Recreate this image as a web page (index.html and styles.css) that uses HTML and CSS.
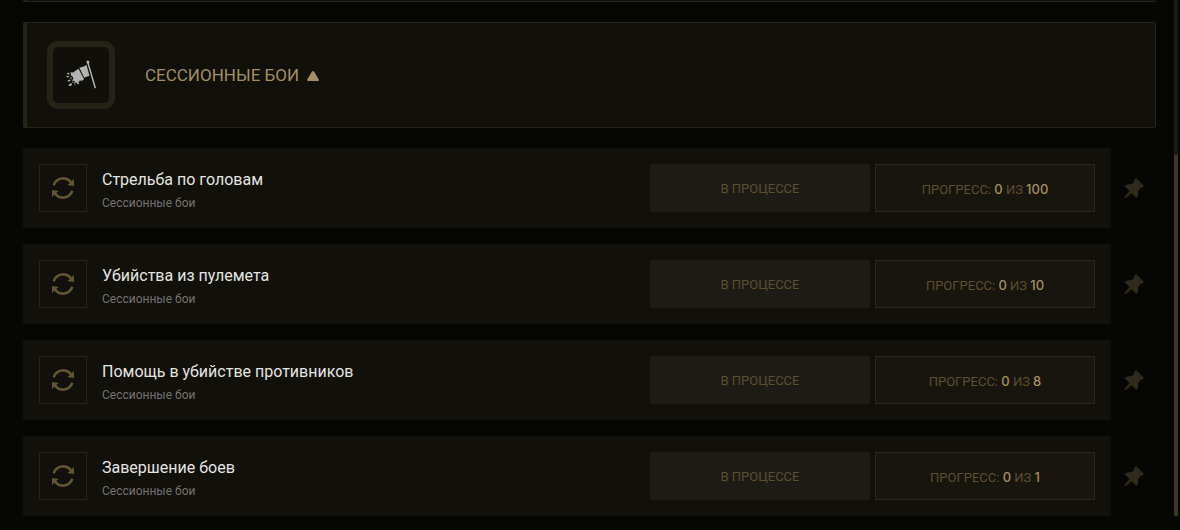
FILE: index.html
```html
<!DOCTYPE html>
<html lang="ru">
<head>
<meta charset="UTF-8">
<meta name="viewport" content="width=device-width, initial-scale=1">
<title>Сессионные бои</title>
<link rel="stylesheet" href="styles.css">
</head>
<body>
<svg class="sprite" aria-hidden="true">
  <symbol id="icon-repeat" viewBox="0 0 24 24">
    <path d="M2.700 9.300A9.800 9.800 0 0 1 20 6.500" fill="none" stroke="currentColor" stroke-width="2.600"/>
    <path d="M23 3v7l-6.500-1z"/>
    <path d="M21.300 14.700A9.800 9.800 0 0 1 4 17.500" fill="none" stroke="currentColor" stroke-width="2.600"/>
    <path d="M1 21v-7l6.500 1z"/>
  </symbol>
  <symbol id="icon-pin" viewBox="0 0 20 20">
    <path d="M12 0l8 8-2 2-1-.4-3 3.400c.5 2.500.2 4.700-1.300 7L7.500 15.200 1.800 20 .5 20v-1.400L5.500 13 0.500 8c2-1.600 4.500-2 7-1.500L10.400 3 10 2z"/>
  </symbol>
</svg>

<div class="page">
  <main class="content">
    <div class="group group-prev"></div>

    <section class="group">
      <div class="group-icon">
        <svg width="32" height="32" viewBox="0 0 32 32" fill="currentColor" aria-hidden="true">
          <path d="M21.500 3.500a1.500 1.500 0 1 1 2.500.5l.2 1.500L31 28.800l-1.400.7L22.700 5.500z"/>
          <path d="M14.300 8.600c2.600-.2 4.900-1 7.200-2.800l3 11.200c-2 .3-3.700.8-5.300 1.800z"/>
          <path d="M5.500 13.300l2.500.2L13.500 9.800l5.500 10.400-1.800 1.500-2.300-.3-1.500 1.800.5 2.300-1.900-.8-.8-1.400-2.200.9.800-2.200-3-.5 1.500-1.500-.3-1.900-2-1.500z"/>
          <path d="M1.500 14l1.700.3.300-1.300 1 2-1.500.8zM1 17.500l2-.8 1.500 1-2 .8zM5.500 18l1.500 1-1.300 1.500zM2.500 21.500l2.500-1 .5 1.200-2 1zM3.500 27l1.200-2.300 2-.4.3 1.500-1.500 1.200zM7 22.500l1.700.3-.7 1.400zM9 24.500l1.700.3-1 1.300z"/>
        </svg>
      </div>
      <button class="group-title" type="button" aria-expanded="true">
        Сессионные бои
        <svg width="12" height="10" viewBox="0 0 12 10" fill="currentColor" aria-hidden="true"><path d="M5 .6Q6-.6 7 .6L11.800 8.500Q12.300 10 11 10H1Q-.3 10 .2 8.500z"/></svg>
      </button>
    </section>

    <ul class="tasks">
      <li class="task">
        <div class="task-body">
          <div class="task-icon"><svg width="24" height="24" aria-hidden="true"><use href="#icon-repeat"/></svg></div>
          <div class="task-text">
            <h3>Стрельба по головам</h3>
            <p>Сессионные бои</p>
          </div>
          <div class="status">В процессе</div>
          <div class="progress">Прогресс: <b>0</b> из <b>100</b></div>
        </div>
        <button class="pin" type="button" aria-label="Закрепить"><svg width="20" height="20" aria-hidden="true"><use href="#icon-pin"/></svg></button>
      </li>
      <li class="task">
        <div class="task-body">
          <div class="task-icon"><svg width="24" height="24" aria-hidden="true"><use href="#icon-repeat"/></svg></div>
          <div class="task-text">
            <h3>Убийства из пулемета</h3>
            <p>Сессионные бои</p>
          </div>
          <div class="status">В процессе</div>
          <div class="progress">Прогресс: <b>0</b> из <b>10</b></div>
        </div>
        <button class="pin" type="button" aria-label="Закрепить"><svg width="20" height="20" aria-hidden="true"><use href="#icon-pin"/></svg></button>
      </li>
      <li class="task">
        <div class="task-body">
          <div class="task-icon"><svg width="24" height="24" aria-hidden="true"><use href="#icon-repeat"/></svg></div>
          <div class="task-text">
            <h3>Помощь в убийстве противников</h3>
            <p>Сессионные бои</p>
          </div>
          <div class="status">В процессе</div>
          <div class="progress">Прогресс: <b>0</b> из <b>8</b></div>
        </div>
        <button class="pin" type="button" aria-label="Закрепить"><svg width="20" height="20" aria-hidden="true"><use href="#icon-pin"/></svg></button>
      </li>
      <li class="task">
        <div class="task-body">
          <div class="task-icon"><svg width="24" height="24" aria-hidden="true"><use href="#icon-repeat"/></svg></div>
          <div class="task-text">
            <h3>Завершение боев</h3>
            <p>Сессионные бои</p>
          </div>
          <div class="status">В процессе</div>
          <div class="progress">Прогресс: <b>0</b> из <b>1</b></div>
        </div>
        <button class="pin" type="button" aria-label="Закрепить"><svg width="20" height="20" aria-hidden="true"><use href="#icon-pin"/></svg></button>
      </li>
    </ul>
  </main>
  <div class="scrollbar"><div class="scrollbar-thumb"></div></div>
</div>
</body>
</html>
```
FILE: styles.css
```css
* {
  box-sizing: border-box;
}
body {
  margin: 0;
  background-color: #060702;
  color: #e4e4e0;
  font-family: Roboto, "Liberation Sans", sans-serif;
}
h3, p, ul {
  margin: 0;
  padding: 0;
}
button {
  background: none;
  border: 0;
  padding: 0;
  font: inherit;
  cursor: pointer;
}
.sprite {
  display: none;
}
svg {
  display: block;
  fill: currentColor;
}
.page {
  display: flex;
  padding: 0 2px 14px 23px;
}
.content {
  flex: 1;
  min-width: 0;
  margin-right: 18px;
}

/* Group header */
.group {
  display: flex;
  align-items: center;
  gap: 30px;
  padding: 18px 20px;
  border: 1px solid #262317;
  border-left: 4px solid #262317;
  border-radius: 2px;
  background-color: #11100b;
  margin-bottom: 20px;
}
.group-prev {
  padding: 1px 0 0;
  border-top: 0;
  border-radius: 0 0 2px 2px;
}
.group-icon {
  display: flex;
  align-items: center;
  justify-content: center;
  width: 68px;
  height: 68px;
  border: 6px solid #252317;
  border-radius: 11px;
  background-color: #100f0a;
  color: #b3b3b3;
}
.group-title {
  display: flex;
  align-items: baseline;
  gap: 8px;
  color: #a38f60;
  font-size: 17px;
  line-height: 24px;
  text-transform: uppercase;
}

/* Tasks */
.tasks {
  display: flex;
  flex-direction: column;
  gap: 16px;
  list-style: none;
}
.task {
  display: flex;
}
.task-body {
  flex: 1;
  display: flex;
  align-items: center;
  gap: 5px;
  padding: 16px;
  background-color: #11100b;
}
.task-icon {
  display: flex;
  align-items: center;
  justify-content: center;
  width: 48px;
  height: 48px;
  border: 1px solid #262317;
  color: #625531;
}
.task-text {
  flex: 1;
  padding: 5px 0 0 10px;
}
.task-text h3 {
  font-size: 16px;
  font-weight: 400;
  line-height: 22px;
}
.task-text p {
  margin-top: 3px;
  color: #73736f;
  font-size: 12px;
  line-height: 18px;
}
.status,
.progress {
  width: 220px;
  height: 48px;
  border: 1px solid #1c1b16;
  background-color: #1c1b16;
  color: #5c4f2f;
  font-size: 13px;
  line-height: 48px;
  text-align: center;
  text-transform: uppercase;
}
.progress {
  border-color: #2b2617;
  background-color: #18150e;
}
.progress b {
  color: #a38f60;
  font-family: Inter, Roboto, sans-serif;
  font-weight: 500;
}
.pin {
  display: flex;
  align-items: center;
  justify-content: center;
  width: 45px;
  color: #302a1b;
}

/* Scrollbar */
.scrollbar {
  display: flex;
  flex-direction: column;
  justify-content: flex-end;
  width: 4px;
  background-color: #1b1a15;
}
.scrollbar-thumb {
  height: 70%;
  background-color: #3e3622;
}
```
